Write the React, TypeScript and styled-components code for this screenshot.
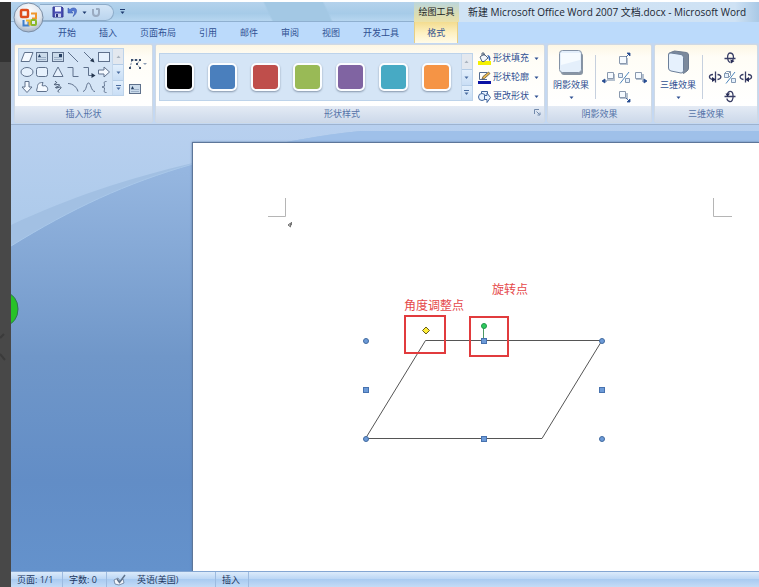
import React from "react";
import styled, { createGlobalStyle, css } from "styled-components";

const GlobalStyle = createGlobalStyle`
  *, *::before, *::after { box-sizing: border-box; }
  body {
    margin: 0;
    background: #fff;
    font-family: "Open Sans", "Noto Sans CJK SC", sans-serif;
    font-size: 9px;
    line-height: 12px;
    color: #1f3b6f;
  }
  button {
    font: inherit;
    color: inherit;
    background: none;
    border: 0;
    padding: 0;
    margin: 0;
    cursor: pointer;
  }
  svg { display: block; }
`;

const Screen = styled.div`
  display: flex;
  height: 100vh;
  padding-top: 2px;
  overflow: hidden;
`;

const Rail = styled.div`
  flex: none;
  width: 11px;
  background: linear-gradient(#333 0 60px, #484848 60px);
  overflow: hidden;
`;

const RailMark = styled.svg`
  margin-top: 328px;
`;

const AppWindow = styled.div`
  flex: 1;
  min-width: 0;
  display: flex;
  flex-direction: column;
  background: #bfd9f7;
`;

const Header = styled.header`
  position: relative;
  flex: none;
  background: #bbdafb;
`;

const TitleBar = styled.div`
  display: grid;
  grid-template-columns: 403px 45px 1fr;
  height: 20px;
  border-bottom: 1px solid #8fb0d0;
  background:
    linear-gradient(65deg, transparent 0 236px, #a3c8e4 238px 290px, transparent 292px),
    linear-gradient(#b4d2ec, #a6cbe8 60%, #b7d6f0);
`;

const OfficeButton = styled.button`
  position: absolute;
  left: 2px;
  top: 0;
  width: 31px;
  height: 31px;
`;

const QuickAccess = styled.div`
  display: flex;
  align-items: center;
  height: 20px;
  padding-left: 29px;
`;

const QuickPill = styled.div`
  display: flex;
  align-items: center;
  gap: 3px;
  width: 74px;
  height: 17px;
  padding-left: 12px;
  border: 1px solid #8eacc9;
  border-left: 0;
  border-radius: 0 9px 9px 0;
  background: linear-gradient(#d3e5f7, #bbd5ee);
  margin-right: 6px;
`;

const ContextTitle = styled.div`
  display: grid;
  place-items: center;
  color: #222;
  background: linear-gradient(#bcd6dd, #d8dcb4 60%, #ece2a9);
`;

const DocTitle = styled.h1`
  margin: 0;
  padding-left: 9px;
  font-size: 10px;
  font-weight: 400;
  line-height: 21px;
  color: #1b2733;
  white-space: nowrap;
  overflow: hidden;
  background: linear-gradient(90deg, #d0e3f4, #cfe2f4 92%, #a9c9e6);
`;

const Tabs = styled.nav`
  display: flex;
  gap: 1px;
  height: 21px;
  padding-left: 36px;
`;

const Tab = styled.button<{ $active?: boolean }>`
  padding: 0 11px;
  color: #2f5092;
  white-space: nowrap;
  ${(p) =>
    p.$active &&
    css`
      margin-left: 3px;
      border: solid #e6cf86;
      border-width: 0 1px;
      padding: 0 12px;
      background: linear-gradient(#f3dc8f, #fdf0c0 50%, #fffbe9);
    `}
`;

const Ribbon = styled.div`
  display: flex;
  flex: none;
  gap: 2px;
  height: 82px;
  padding: 1px 1px 1px 3px;
  color: #2f5092;
  background: #c4d8f2;
  border-bottom: 1px solid #9db3d0;
`;

const Group = styled.section<{ $width?: number }>`
  ${(p) => (p.$width ? css`flex: none; width: ${p.$width}px;` : css`flex: 1; min-width: 0;`)}
  display: flex;
  flex-direction: column;
  border: 1px solid #cfd9e4;
  border-radius: 2px;
  background: linear-gradient(#fdf7e4, #fffdf6 12px, #fff 60px);
`;

const GroupBody = styled.div<{ $gap?: number; $top?: boolean }>`
  flex: 1;
  display: flex;
  align-items: ${(p) => (p.$top ? "flex-start" : "center")};
  gap: ${(p) => p.$gap ?? 0}px;
  padding: 3px 3px 0;
`;

const GroupLabel = styled.div<{ $launcher?: boolean }>`
  position: relative;
  height: 16px;
  line-height: 16px;
  padding-right: ${(p) => (p.$launcher ? 16 : 0)}px;
  text-align: center;
  color: #5473a8;
  background: linear-gradient(#e4ebf5, #cdd9ea);
`;

const Launcher = styled.button`
  position: absolute;
  right: 3px;
  top: 3px;
`;

const Gallery = styled.div<{ $width?: number }>`
  display: flex;
  ${(p) => (p.$width ? css`flex: none; width: ${p.$width}px;` : css`flex: 1; min-width: 0;`)}
  height: 48px;
  border: 1px solid #bdd3ea;
  background: #d5e5f6;
`;

const ShapeGrid = styled.div`
  flex: 1;
  display: grid;
  grid-template-columns: repeat(6, 1fr);
  grid-template-rows: repeat(3, 1fr);
  place-items: center;
`;

const SwatchRow = styled.div`
  flex: 1;
  display: flex;
  align-items: center;
  justify-content: space-between;
  padding: 0 10px 0 5px;
`;

const Swatch = styled.button<{ $color: string }>`
  width: 29px;
  height: 28px;
  border: 2px solid #fbfdff;
  border-radius: 5px;
  background: ${(p) => p.$color};
  background-clip: padding-box;
  box-shadow: 0 1px 2px #8595aa;
`;

const Scroller = styled.div`
  flex: none;
  display: grid;
  grid-template-rows: repeat(3, 1fr);
  width: 11px;
  border-left: 1px solid #c5d8ec;
`;

const ScrollButton = styled.button<{ $off?: boolean }>`
  display: grid;
  place-items: center;
  background: ${(p) => (p.$off ? "#e3e8ef" : "linear-gradient(#e2effc, #c9def5)")};
  color: ${(p) => (p.$off ? "#a9b3bf" : "#4a6ca0")};
  & + & { border-top: 1px solid #b4cce6; }
`;

const SideTools = styled.div`
  display: flex;
  flex-direction: column;
  gap: 12px;
  padding: 9px 0 0 4px;
`;

const MenuList = styled.div`
  flex: none;
  display: flex;
  flex-direction: column;
  gap: 5px;
  padding: 0 2px 0 0;
`;

const MenuButton = styled.button`
  display: flex;
  align-items: center;
  gap: 2px;
  height: 14px;
  white-space: nowrap;
  & > svg:last-child { margin-left: 3px; }
`;

const LargeButton = styled.button`
  display: flex;
  flex-direction: column;
  align-items: center;
  gap: 3px;
  width: 40px;
  padding-bottom: 5px;
  white-space: nowrap;
`;

const Divider = styled.div`
  width: 1px;
  height: 44px;
  background: #c6d0de;
`;

const NudgeGrid = styled.div`
  flex: 1;
  display: grid;
  grid-template-columns: repeat(3, 1fr);
  grid-template-rows: repeat(3, 19px);
  place-items: center;
  & > :nth-child(1) { grid-area: 1 / 2; }
  & > :nth-child(2) { grid-area: 2 / 1; }
  & > :nth-child(3) { grid-area: 2 / 2; }
  & > :nth-child(4) { grid-area: 2 / 3; }
  & > :nth-child(5) { grid-area: 3 / 2; }
`;

const Workspace = styled.main`
  position: relative;
  flex: 1;
  min-height: 0;
  padding: 17px 0 0 181px;
  overflow: hidden;
`;

const Backdrop = styled.svg`
  position: absolute;
  inset: 0;
  width: 100%;
  height: 100%;
`;

const Page = styled.article`
  position: relative;
  height: 100%;
  background: #fff;
  border: solid #5d7699;
  border-width: 1px 0 0 1px;
  box-shadow: 0 0 2px #5f7da6;
  overflow: hidden;
`;

const Drawing = styled.svg`
  position: absolute;
  left: 0;
  top: 0;
`;

const Note = styled.span<{ $x: number; $y: number }>`
  position: absolute;
  left: ${(p) => p.$x}px;
  top: ${(p) => p.$y}px;
  font-size: 12px;
  line-height: 16px;
  color: #e5484a;
  white-space: nowrap;
`;

const StatusBar = styled.footer`
  flex: none;
  display: flex;
  height: 16px;
  line-height: 16px;
  color: #22375f;
  background: linear-gradient(#dcebfb, #bcd7f5 45%, #a9cbf1 50%, #c3dbf6);
  border-top: 1px solid #84a6d2;
`;

const StatusItem = styled.span<{ $width: number }>`
  display: flex;
  align-items: center;
  gap: 10px;
  width: ${(p) => p.$width}px;
  padding-left: 6px;
  border-right: 1px solid #9dbbe0;
  white-space: nowrap;
`;

const Caret = ({ up, bar }: { up?: boolean; bar?: boolean }) => (
  <svg width="5" height="6" viewBox="0 0 5 6" fill="currentColor" aria-hidden="true">
    {bar && <rect width="5" height="1" />}
    <path d={up ? "M.5 4h4l-2-2.500z" : "M.5 2.500h4l-2 2.500z"} />
  </svg>
);

const OfficeLogo = () => (
  <svg width="31" height="31" viewBox="0 0 31 31" aria-hidden="true">
    <defs>
      <radialGradient id="orb" cx="50%" cy="30%" r="75%">
        <stop offset="0" stopColor="#fff" />
        <stop offset=".6" stopColor="#dfe5ed" />
        <stop offset="1" stopColor="#9aa9bc" />
      </radialGradient>
    </defs>
    <circle cx="15.500" cy="15.500" r="14.500" fill="url(#orb)" stroke="#7b8ea6" />
    <g fill="none" strokeWidth="2">
      <path d="M18 11.500h5v5h-4" stroke="#f0962c" />
      <path d="M10.500 18v5.500h5v-4" stroke="#3f7fcc" />
      <rect x="8" y="8" width="7" height="7" rx="1" stroke="#df4c1c" strokeWidth="2.500" />
      <rect x="18" y="18" width="5" height="5" rx="1" stroke="#8ab82c" />
      <path d="M13 18.500h3.500v5" stroke="#f3b824" />
    </g>
  </svg>
);

const SaveIcon = () => (
  <svg width="12" height="12" viewBox="0 0 12 12" aria-hidden="true">
    <path d="M1 1h9l1 1v9H1z" fill="#4a4fb4" stroke="#343a92" />
    <path d="M3 1h6v4.500H3z" fill="#eef3ff" />
    <path d="M3 7.500h6V11H3z" fill="#c8d2ee" />
    <path d="M4 8h2v3H4z" fill="#30377f" />
  </svg>
);

const UndoIcon = () => (
  <svg width="12" height="12" viewBox="0 0 12 12" aria-hidden="true">
    <path d="M1 2v5h5L4.500 5.400C7 3.600 9 5.500 6 10.500 11 7 10.500 1.500 6 2 4.700 2.200 3.800 2.800 3 3.700z" fill="#5478d2" stroke="#3958ad" strokeWidth=".6" />
  </svg>
);

const RedoIcon = () => (
  <svg width="12" height="12" viewBox="0 0 12 12" fill="none" stroke="#9aabc1" strokeWidth="2" aria-hidden="true">
    <path d="M3 3v4a3 3 0 0 0 6 0V3M6 3h3.500" />
  </svg>
);

const ShapeSvg = ({ children }: { children: React.ReactNode }) => (
  <svg width="14" height="14" viewBox="0 0 14 14" fill="none" stroke="#5f718c" aria-hidden="true">
    {children}
  </svg>
);

const TextBoxShape = ({ vertical }: { vertical?: boolean }) => (
  <>
    <rect x="1.500" y="2.500" width="11" height="9" fill="#cbdbeb" />
    <path d="M3 9.500h8M3 7.500h8" stroke="#9cb0c8" />
    <path d={vertical ? "M8 4h3v3H8z" : "M3 7l1.500-3L6 7z"} fill="#263f62" stroke="none" />
  </>
);

const shapes: { name: string; art: React.ReactNode }[] = [
  { name: "平行四边形", art: <path d="M4.500 2.500h8.500l-3.500 9H1z" fill="#f4f9ff" /> },
  { name: "文本框", art: <TextBoxShape /> },
  { name: "竖排文本框", art: <TextBoxShape vertical /> },
  { name: "直线", art: <path d="M2 2l10 10" /> },
  { name: "箭头", art: <><path d="M2 2l8 8" /><path d="M12.500 12.500l-4.500-1.500 3-3z" fill="#24364f" stroke="none" /></> },
  { name: "矩形", art: <rect x="1.500" y="2.500" width="11" height="9" fill="#e6f1fd" /> },
  { name: "椭圆", art: <ellipse cx="7" cy="7" rx="6" ry="4.500" fill="#e6f1fd" /> },
  { name: "圆角矩形", art: <rect x="1.500" y="2.500" width="11" height="9" rx="2" fill="#e6f1fd" /> },
  { name: "三角形", art: <path d="M7 2l5 9.500H2z" fill="#e6f1fd" /> },
  { name: "肘形连接符", art: <path d="M1.500 2.500h5.500v9h5.500" /> },
  { name: "肘形箭头", art: <><path d="M1.500 2.500h5v8h4" /><path d="M13.500 10.500l-4-2.500v5z" fill="#24364f" stroke="none" /></> },
  { name: "右箭头", art: <path d="M1.500 5h5.500V2l5.500 5L7 12V9H1.500z" fill="#f4f9ff" /> },
  { name: "下箭头", art: <path d="M5 1.500h4V7h3l-5 5.500L2 7h3z" fill="#f4f9ff" /> },
  { name: "任意多边形", art: <path d="M2 11.500c-1-2 .5-3 .5-5C2.500 4 4 2.500 8 2.500L7 5.500c2 1 2-.5 4 .5 2.500 2 2 5.500 0 5.500z" fill="#f4f9ff" /> },
  { name: "自由曲线", art: <path d="M4 1.500C7 2 5 4 3.500 4c-1 2 5-.5 5 1C8 7 3 7 5 8c2 0 5-2 5-.5C9.500 10 5 10 8 12.500" stroke="#33455f" /> },
  { name: "弧形", art: <path d="M2 3.500c5 0 9 4 10 8" /> },
  { name: "曲线", art: <path d="M1 11.500c4-1 3-8.500 5.500-8.500S9 11.500 13 11.500" /> },
  { name: "左大括号", art: <path d="M9.500 1.500C6 1.500 7.500 3 7.500 5S6.500 7 5 7c1.500 0 2.500 0 2.500 2s-1.500 3.500 2 3.500" /> },
];

const styles = [
  { name: "黑色", color: "#000000" },
  { name: "蓝色", color: "#4a7fbd" },
  { name: "红色", color: "#bf4e4b" },
  { name: "绿色", color: "#99ba56" },
  { name: "紫色", color: "#8064a2" },
  { name: "青色", color: "#47aac4" },
  { name: "橙色", color: "#f59445" },
];

const GalleryScroller = () => (
  <Scroller>
    <ScrollButton $off aria-label="上一行"><Caret up /></ScrollButton>
    <ScrollButton aria-label="下一行"><Caret /></ScrollButton>
    <ScrollButton aria-label="其他"><Caret bar /></ScrollButton>
  </Scroller>
);

const EditPointsIcon = () => (
  <svg width="19" height="13" viewBox="0 0 19 13" aria-hidden="true">
    <path d="M2 11L4 3h8l-3 4 3 4" fill="none" stroke="#7d8da3" strokeDasharray="2 1" />
    <path d="M1 10h2v2H1zM3 2h2v2H3zM7 2h2v2H7zM11 2h2v2h-2zM8 6h2v2H8zM11 10h2v2h-2z" fill="#3d506f" />
    <path d="M15 6h4l-2 2z" fill="#8c9db5" />
  </svg>
);

const FillIcon = () => (
  <svg width="13" height="13" viewBox="0 0 13 13" aria-hidden="true">
    <rect x="0" y="9" width="13" height="4" fill="#f4f000" />
    <path d="M2 5l4-3 4 4-4 3.500H4z" fill="#f4f7fb" stroke="#53657d" />
    <path d="M4 4V1h2v3" fill="none" stroke="#53657d" />
    <path d="M9 3c4 0 4 5 2.500 6-1-1-.5-4-2.500-6z" fill="#3264b4" />
  </svg>
);

const OutlineIcon = () => (
  <svg width="13" height="13" viewBox="0 0 13 13" aria-hidden="true">
    <rect y="10" width="13" height="3" fill="#0b12a4" />
    <path d="M1.500 8.500v-7H9M1.500 8.500H9" fill="none" stroke="#536c91" />
    <path d="M4 8l1-2.500L10.500 1l1.500 1.500L6.500 7.500z" fill="#eab84c" stroke="#5a5547" strokeWidth=".8" />
  </svg>
);

const ChangeIcon = () => (
  <svg width="13" height="13" viewBox="0 0 13 13" fill="#e9f3ff" stroke="#40659d" aria-hidden="true">
    <path d="M3.500 1.500h6v5h-6z" />
    <circle cx="4" cy="7" r="3.500" />
    <path d="M6.500 5.500H9V3l3.500 4.500L9 12.500v-3H6.500z" />
  </svg>
);

const LaunchIcon = () => (
  <svg width="7" height="7" viewBox="0 0 7 7" fill="none" stroke="#7189ab" aria-hidden="true">
    <path d="M.5 5V.5H5M2.500 2.500l3 3M6 3.500V6H3.500" />
  </svg>
);

const ShadowIcon = () => (
  <svg width="28" height="27" viewBox="0 0 28 27" aria-hidden="true">
    <rect x="4" y="4" width="22" height="22" rx="3" fill="#8995a3" />
    <rect x="2.500" y="1.500" width="22" height="22" rx="3" fill="#e4effb" stroke="#8392a6" />
    <path d="M4 4h19v7L4 16z" fill="#f6fbff" />
  </svg>
);

const CubeIcon = () => (
  <svg width="28" height="27" viewBox="0 0 28 27" aria-hidden="true">
    <path d="M4.500 6q0-2 2-2.500l4-1.500 12 1.500q2 .5 2 2.500v13q0 2-1.500 3l-3.500 2.500z" fill="#7b899c" stroke="#6c7a8e" />
    <path d="M4.500 6q0-2.500 2.500-2l10 1.500q2.500.5 2.500 3v13q0 3-2.500 2.500l-10-2q-2.500-.5-2.500-3z" fill="#e6f1fd" stroke="#6c7f99" />
  </svg>
);

const nudgePaths: Record<string, string> = {
  up: "M8 5l3-3M9 1h3v3z",
  left: "M5 10H1M3 8v4L0 10z",
  right: "M8 10h4M10 8v4l3-2z",
  down: "M8 8l3 3M9 12h3V9z",
};

const ShadowNudgeIcon = ({ dir }: { dir: string }) => (
  <svg width="13" height="13" viewBox="0 0 13 13" aria-hidden="true">
    <path d={dir === "left" ? "M5 3h8v7H5z" : dir === "up" ? "M2 6h8v7H2z" : "M2 3h8v6H2z"} fill="#b5c1cf" />
    <path d={dir === "left" ? "M5.500 1.500h6v6h-6z" : dir === "up" ? "M1.500 4.500h7v7h-7z" : "M1.500 1.500h6v6h-6z"} fill="#f5faff" stroke="#8a99ae" />
    <path d={nudgePaths[dir]} fill="#264b91" stroke="#264b91" strokeWidth=".8" />
  </svg>
);

const ToggleIcon = ({ cube }: { cube?: boolean }) => (
  <svg width="14" height="13" viewBox="0 0 14 13" fill="none" stroke="#8499b3" aria-hidden="true">
    <path d="M1.500 2.500h4v4h-4z" fill="#e5f0fc" />
    {cube && <path d="M1.500 2.500l2-2h4v4l-2 2M5.500 2.500l2-2" />}
    <path d="M12 1L3 12.500" stroke="#4e86bd" />
    <path d="M8.500 7.500h4v4h-4z" fill="#e5f0fc" />
  </svg>
);

const tilts: Record<string, { ring: string; head: string }> = {
  up: { ring: "M1.500 7.500h11M7.500 11.500C4 11 3.500 2 7 2s4.500 4.500 2.500 8", head: "M7.500 8.500l4 1.500-3.500 2.500z" },
  down: { ring: "M1.500 7.500h11M4.500 5.500C5 1.500 9.500 1 10 6s-1.500 7-3.500 6.500S4 10.500 4 9.500", head: "M2.500 4.500h4.500L4.500 8z" },
  left: { ring: "M7.500 1.500v11M5 4.500C0 5 .5 9 5 9.500M9.500 4.500c5 .5 4 4.500 0 5", head: "M4 7l4 2.500L4 12z" },
  right: { ring: "M6.500 1.500v11M9 4.500c5 .5 4.500 4.500 0 5M4.500 4.500c-5 .5-4 4.500 0 5", head: "M10 7L6 9.500l4 2.500z" },
};

const TiltIcon = ({ dir }: { dir: string }) => (
  <svg width="14" height="14" viewBox="0 0 14 14" aria-hidden="true">
    <path d={tilts[dir].ring} fill="none" stroke="#3a3f66" strokeWidth="1.300" />
    <path d={tilts[dir].head} fill="#262b55" />
  </svg>
);

const ProofIcon = () => (
  <svg width="14" height="12" viewBox="0 0 14 12" aria-hidden="true">
    <path d="M1 6l4-2 2 3 3-2 1 4-5 2-4-1z" fill="#f2f6fb" stroke="#667a96" strokeWidth=".8" />
    <path d="M4 5l2.500 3.500L12 1" fill="none" stroke="#60748e" strokeWidth="1.500" />
  </svg>
);

const tabs = ["开始", "插入", "页面布局", "引用", "邮件", "审阅", "视图", "开发工具", "格式"];

const roundHandles = [[173, 198], [409, 198], [173, 296], [409, 296]];
const squareHandles = [[291, 198], [173, 247], [409, 247], [291, 296]];

export default function App() {
  return (
    <>
      <GlobalStyle />
      <Screen>
        <Rail>
          <RailMark width="11" height="36" viewBox="0 0 11 36" aria-hidden="true">
            <path d="M0 8l4-4M0 24l5 6" stroke="#3b3b3b" strokeWidth="2" />
          </RailMark>
        </Rail>
        <AppWindow>
          <Header>
            <TitleBar>
              <QuickAccess>
                <QuickPill>
                  <button aria-label="保存"><SaveIcon /></button>
                  <button aria-label="撤消"><UndoIcon /></button>
                  <button aria-label="撤消列表"><Caret /></button>
                  <button aria-label="重复"><RedoIcon /></button>
                </QuickPill>
                <button aria-label="自定义快速访问工具栏"><Caret bar /></button>
              </QuickAccess>
              <ContextTitle>绘图工具</ContextTitle>
              <DocTitle>新建 Microsoft Office Word 2007 文档.docx - Microsoft Word</DocTitle>
            </TitleBar>
            <Tabs>
              {tabs.map((t) => (
                <Tab key={t} $active={t === "格式"}>{t}</Tab>
              ))}
            </Tabs>
            <OfficeButton aria-label="Office 按钮"><OfficeLogo /></OfficeButton>
          </Header>

          <Ribbon>
            <Group $width={139}>
              <GroupBody $top>
                <Gallery $width={106}>
                  <ShapeGrid>
                    {shapes.map((s) => (
                      <button key={s.name} aria-label={s.name}><ShapeSvg>{s.art}</ShapeSvg></button>
                    ))}
                  </ShapeGrid>
                  <GalleryScroller />
                </Gallery>
                <SideTools>
                  <button aria-label="编辑形状"><EditPointsIcon /></button>
                  <button aria-label="文本框"><ShapeSvg><TextBoxShape /></ShapeSvg></button>
                </SideTools>
              </GroupBody>
              <GroupLabel>插入形状</GroupLabel>
            </Group>

            <Group>
              <GroupBody $gap={5}>
                <Gallery>
                  <SwatchRow>
                    {styles.map((s) => (
                      <Swatch key={s.name} $color={s.color} aria-label={s.name} />
                    ))}
                  </SwatchRow>
                  <GalleryScroller />
                </Gallery>
                <MenuList>
                  <MenuButton><FillIcon />形状填充<Caret /></MenuButton>
                  <MenuButton><OutlineIcon />形状轮廓<Caret /></MenuButton>
                  <MenuButton><ChangeIcon />更改形状<Caret /></MenuButton>
                </MenuList>
              </GroupBody>
              <GroupLabel $launcher>
                形状样式
                <Launcher aria-label="设置自选图形格式"><LaunchIcon /></Launcher>
              </GroupLabel>
            </Group>

            <Group $width={105}>
              <GroupBody $gap={4}>
                <LargeButton><ShadowIcon />阴影效果<Caret /></LargeButton>
                <Divider />
                <NudgeGrid>
                  <button aria-label="略向上移"><ShadowNudgeIcon dir="up" /></button>
                  <button aria-label="略向左移"><ShadowNudgeIcon dir="left" /></button>
                  <button aria-label="设置/取消阴影"><ToggleIcon /></button>
                  <button aria-label="略向右移"><ShadowNudgeIcon dir="right" /></button>
                  <button aria-label="略向下移"><ShadowNudgeIcon dir="down" /></button>
                </NudgeGrid>
              </GroupBody>
              <GroupLabel>阴影效果</GroupLabel>
            </Group>

            <Group $width={104}>
              <GroupBody $gap={4}>
                <LargeButton><CubeIcon />三维效果<Caret /></LargeButton>
                <Divider />
                <NudgeGrid>
                  <button aria-label="上翘"><TiltIcon dir="up" /></button>
                  <button aria-label="左偏"><TiltIcon dir="left" /></button>
                  <button aria-label="设置/取消三维效果"><ToggleIcon cube /></button>
                  <button aria-label="右偏"><TiltIcon dir="right" /></button>
                  <button aria-label="下俯"><TiltIcon dir="down" /></button>
                </NudgeGrid>
              </GroupBody>
              <GroupLabel>三维效果</GroupLabel>
            </Group>
          </Ribbon>

          <Workspace>
            <Backdrop aria-hidden="true">
              <defs>
                <linearGradient id="sky" x1="0" y1="0" x2="0" y2="140" gradientUnits="userSpaceOnUse">
                  <stop offset="0" stopColor="#b8d0ef" />
                  <stop offset="1" stopColor="#a9c8e9" />
                </linearGradient>
                <linearGradient id="hill" x1="0" y1="0" x2="0" y2="446" gradientUnits="userSpaceOnUse">
                  <stop offset="0" stopColor="#9bbbe6" />
                  <stop offset=".12" stopColor="#94b5df" />
                  <stop offset=".52" stopColor="#7097c9" />
                  <stop offset=".8" stopColor="#628dc6" />
                  <stop offset="1" stopColor="#6492cc" />
                </linearGradient>
              </defs>
              <rect width="100%" height="100%" fill="url(#sky)" />
              <path d="M0 100C60 72 115 54 182 38C240 24 290 12 350 6H4000V3000H0z" fill="#a2c0e3" />
              <path d="M0 121C60 84 115 58 182 39V3000H0z" fill="url(#hill)" />
              <path d="M182 38C240 24 290 12 350 6H4000V40H182z" fill="#9fc0e9" />
              <path d="M0 121C60 84 115 58 182 39" fill="none" stroke="#a9c8ea" />
              <ellipse cx="-5" cy="184" rx="12" ry="16" fill="#27c227" stroke="#2f7550" />
            </Backdrop>
            <Page>
              <Drawing width="600" height="320" viewBox="0 0 600 320" fill="none" aria-hidden="true">
                <path d="M75 73.500h17.500V55M539 73.500h-18.500V55" stroke="#b5b5b5" />
                <path d="M98.500 79v3H95M97.500 80L95 82l2.500 2z" stroke="#777" />
                <path d="M232.500 197.500h176.500L349 295.500H172.500z" stroke="#555" />
                <path d="M290.500 198v-15" stroke="#4b9964" />
                {roundHandles.map(([x, y]) => (
                  <circle key={`${x}-${y}`} cx={x} cy={y} r="2.500" fill="#6d9bd8" stroke="#416a9f" />
                ))}
                {squareHandles.map(([x, y]) => (
                  <rect key={`${x}-${y}`} x={x - 2.5} y={y - 2.5} width="5" height="5" fill="#6d9bd8" stroke="#4772af" />
                ))}
                <circle cx="291" cy="183" r="2.500" fill="#2dcb5e" stroke="#23944a" />
                <path d="M233 184l3.500 3.500-3.500 3.500-3.500-3.500z" fill="#ffee38" stroke="#685d1b" />
                <rect x="212" y="173" width="40" height="37" stroke="#e13b3d" strokeWidth="2" />
                <rect x="277" y="174" width="38" height="39" stroke="#e13b3d" strokeWidth="2" />
              </Drawing>
              <Note $x={211} $y={155}>角度调整点</Note>
              <Note $x={299} $y={139}>旋转点</Note>
            </Page>
          </Workspace>

          <StatusBar>
            <StatusItem $width={52}>页面: 1/1</StatusItem>
            <StatusItem $width={44}>字数: 0</StatusItem>
            <StatusItem $width={109}><ProofIcon />英语(美国)</StatusItem>
            <StatusItem $width={33}>插入</StatusItem>
          </StatusBar>
        </AppWindow>
      </Screen>
    </>
  );
}
